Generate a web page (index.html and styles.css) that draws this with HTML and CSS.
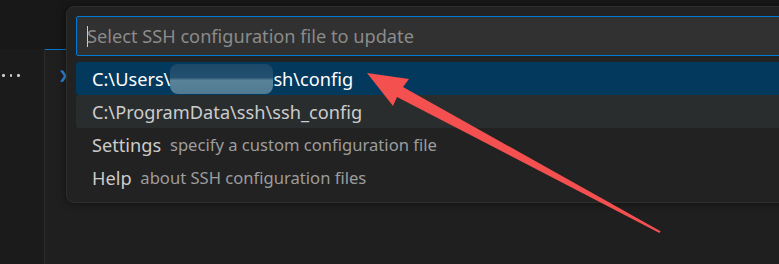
FILE: index.html
```html
<!DOCTYPE html>
<html lang="en">
<head>
    <meta charset="UTF-8">
    <title>Select SSH configuration file</title>
    <link rel="stylesheet" href="styles.css">
</head>
<body>
    <div class="workbench">
        <div class="topbar"></div>
        <div class="main">
            <div class="sidebar">
                <span class="dots"><i></i><i></i><i></i></span>
            </div>
            <div class="editor">
                <div class="tab-strip"></div>
                <span class="chevron">&#x276F;</span>
            </div>
        </div>
    </div>

    <!-- Quick pick -->
    <div class="quick-pick">
        <div class="qp-input">
            <span class="caret"></span>
            <span class="placeholder">Select SSH configuration file to update</span>
        </div>
        <ul class="qp-list">
            <li class="selected">C:\Users\<span class="blurred"></span>sh\config</li>
            <li class="hover">C:\ProgramData\ssh\ssh_config</li>
            <li>Settings <span class="desc">specify a custom configuration file</span></li>
            <li>Help <span class="desc">about SSH configuration files</span></li>
        </ul>
    </div>

    <svg class="arrow" width="779" height="264" viewBox="0 0 779 264">
        <polygon points="367,73 409,79 403,87 660.6,231.2 659.4,233 397,97 393,106" fill="#f4504f"/>
    </svg>
</body>
</html>
```

FILE: styles.css
```css
body {
    margin: 0;
    width: 779px;
    height: 264px;
    overflow: hidden;
    background-color: #181818;
    font-family: "Noto Sans", "Open Sans", sans-serif;
    position: relative;
}

.workbench {
    display: flex;
    flex-direction: column;
    height: 100%;
}

.topbar {
    height: 49px;
    background-color: #181818;
    border-bottom: 1px solid #2b2b2b;
}

.main {
    flex: 1;
    display: flex;
}

.sidebar {
    width: 44px;
    background-color: #1b1b1b;
    border-right: 1px solid #2b2b2b;
    margin-top: -1px;
    padding-top: 25px;
}

.dots {
    display: flex;
    gap: 5px;
    padding-left: 2px;
}

.dots i {
    width: 2.5px;
    height: 2.5px;
    border-radius: 50%;
    background-color: #cccccc;
}

.editor {
    flex: 1;
    background-color: #1f1f1f;
    position: relative;
}

.tab-strip {
    width: 21px;
    height: 0;
    border-top: 1px solid #0078d4;
    margin-top: -1px;
}

.chevron {
    position: absolute;
    left: 14px;
    top: 17px;
    font-size: 11px;
    color: #2f8ad8;
    font-weight: bold;
}

.quick-pick {
    position: absolute;
    left: 66px;
    top: 6px;
    width: 740px;
    height: 197px;
    box-sizing: border-box;
    padding: 9px 0 0 9px;
    background-color: #222222;
    border: 1px solid #2e2e2e;
    border-radius: 8px;
    box-shadow: 0 0 8px rgba(0, 0, 0, 0.5);
}

.qp-input {
    height: 38px;
    display: flex;
    align-items: center;
    background-color: #313131;
    border: 1px solid #0078d4;
    border-radius: 2px;
    padding-left: 10px;
}

.caret {
    width: 1px;
    height: 21px;
    background-color: #cccccc;
}

.placeholder {
    font-size: 18.2px;
    color: #8b8b8b;
    margin-left: -1px;
}

.qp-list {
    list-style-type: none;
    margin: 6px 0 0;
    padding: 0;
}

.qp-list li {
    height: 33px;
    display: flex;
    align-items: center;
    padding-left: 16px;
    font-size: 18.2px;
    color: #cccccc;
    border-radius: 3px;
    white-space: pre;
}

.qp-list li.selected {
    background-color: #04395e;
    color: #ffffff;
}

.qp-list li.hover {
    background-color: #2a2d2e;
}

.blurred {
    width: 103px;
    height: 30px;
    border-radius: 8px;
    background: linear-gradient(#1d4968 0%, #23506e 45%, #5a8399 55%, #4f7a92 100%);
}

.desc {
    font-size: 16.6px;
    color: #9d9d9d;
    margin-left: 4px;
}

.arrow {
    position: absolute;
    left: 0;
    top: 0;
}
```
